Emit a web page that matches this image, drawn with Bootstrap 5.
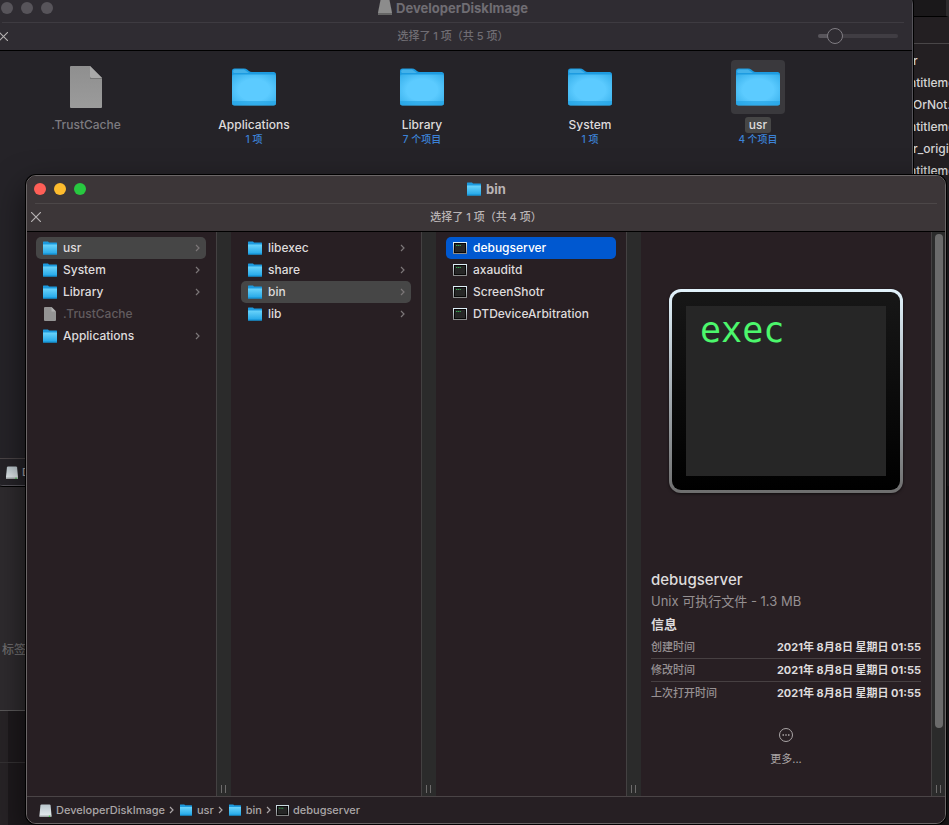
<!DOCTYPE html>
<html lang="zh-CN">
<head>
<meta charset="utf-8">
<meta name="viewport" content="width=device-width, initial-scale=1">
<title>bin</title>
<link href="https://cdn.jsdelivr.net/npm/bootstrap@5.3.0/dist/css/bootstrap.min.css" rel="stylesheet">
<style>
body { font-family: Inter, "Noto Sans CJK SC", sans-serif; font-size: 12px; line-height: 16px; font-weight: 500; background: #1a1719; color: #dedbdc; }
a { color: inherit; text-decoration: none; }
.desktop { min-height: 100vh; }
.win { position: absolute; border-radius: 10px; overflow: hidden; display: flex; flex-direction: column; }
.win-files { top: 0; right: 0; width: 60px; height: 486px; background: #231f22; color: #d5d3d4; border-radius: 0; }
.files-top { height: 17px; background: #1a181a; border-bottom: 1px solid #000; border-right: 3px solid #2c2a2c; }
.files-head { height: 27px; border-bottom: 1px solid #494648; }
.files-list { padding: 6px 0 0 20px; white-space: nowrap; line-height: 22px; }
.win-info { left: -240px; top: 480px; width: 300px; height: 231px; border: 1px solid #5a5859; border-radius: 0 0 10px 10px; background: #2e2b2e; color: #6d6b6d; }
.info-label { font-size: 12px; padding: 0 33px 52px 0; }
.win-back-list { left: -240px; top: 700px; width: 300px; bottom: 0; background: #1d191c; border-left: 0; border-radius: 0; }
.back-list-side { width: 248px; background: #272326; }
.back-list-line { border-bottom: 1px solid #343133; height: 63px; }
.win-disk { left: -7px; right: 36px; top: -6px; height: 492px; background: #252328; border: 1px solid #55535a; box-shadow: 0 0 0 1px #000; }
.win-bin { left: 26px; right: 3px; top: 175px; bottom: 1px; background: #281f23; border: 1px solid #6b6667; box-shadow: 0 0 0 1px #000, 0 12px 32px rgba(0,0,0,.6); }
.bar { background: #3c3638; color: #b9b4b5; }
.win-disk .bar { background: #2f2c32; color: #6f6d73; }
.bar-title { height: 27px; font-size: 13px; font-weight: 700; padding-bottom: 2px; }
.bar-status { height: 28px; font-size: 11px; border-bottom: 1px solid #000; padding-bottom: 1px; }
.bar-rule { height: 0; border-top: 1px solid #4c4748; margin: 0 8px; }
.win-disk .bar-rule { border-color: #3e3b41; }
.lights { position: absolute; left: 7px; top: 0; height: 26px; }
.light { width: 12px; height: 12px; border-radius: 50%; border: 0; padding: 0; background: #57545a; }
.light-close { background: #ff5f57; }
.light-min { background: #febc2e; }
.light-max { background: #28c840; }
.bar-x { position: absolute; left: 3px; top: 0; height: 26px; width: 12px; border: 0; padding: 0; background: none; color: #b5b1b2; }
.zoomer { position: absolute; right: 14px; top: 5px; width: 80px; height: 16px; margin: 0; background: none; -webkit-appearance: none; appearance: none; }
.zoomer::-webkit-slider-runnable-track { height: 4px; border-radius: 2px; background: linear-gradient(90deg, #58555b 20%, #403d43 20%); }
.zoomer::-webkit-slider-thumb { -webkit-appearance: none; width: 16px; height: 16px; margin-top: -6px; border-radius: 50%; background: #2f2c32; border: 1px solid #807d83; }
.icons { padding: 9px 64px 0 8px; }
.icon-item { width: 168px; }
.icon-box { width: 54px; height: 54px; border-radius: 4px; margin-bottom: 3px; }
.icon-item.picked .icon-box { background: #3a393d; }
.icon-name { padding: 0 4px; border-radius: 3px; }
.icon-item.picked .icon-name { background: #464646; }
.icon-note { font-size: 10px; line-height: 13px; color: #3c82d6; }
.icon-item.ghost, .entry.ghost { color: #7d7b80; }
.entry.ghost { color: #625c5f; }
.disk-body { flex: 1 1 auto; }
.path { height: 27px; border-top: 1px solid #4a4446; font-size: 11px; color: #aaa6a7; padding: 0 12px; background: #261f23; }
.win-disk .path { background: #252328; padding: 0 12px; }
.crumb { margin: 0 4px; }
.crumb-sep { margin-right: 5px; }
.pane { width: 190px; padding: 5px 10px 0; }
.pane:first-child { width: 189px; padding-left: 9px; }
.gutter { width: 15px; background: #2b2b2b; border-left: 1px solid #444142; color: #6d6b6b; padding: 0 2px 3px 0; }
.entry { height: 22px; border-radius: 5px; padding: 0 6px; gap: 5px; }
.entry.trail { background: #464646; }
.entry.chosen { background: #0058d0; color: #fff; }
.chev { color: #7c7778; }
.preview { padding: 57px 10px 0; }
.term { width: 234px; height: 204px; border: 3px solid transparent; border-radius: 12px; background: linear-gradient(#171717, #000) padding-box, linear-gradient(#e2f3fc, #a5adb3 50%, #6e6e6e) border-box; padding: 14px; box-shadow: 0 1px 3px rgba(0,0,0,.6); }
.term-screen { background: #262626; color: #4cf76c; font: 35px/48px "DejaVu Sans Mono", monospace; padding-left: 14px; }
.preview-text { margin-top: 77px; }
.file-name { font-size: 15px; line-height: 20px; }
.file-kind { font-size: 13px; line-height: 22px; font-weight: 400; color: #969092; }
.info-head { font-size: 13px; line-height: 24px; font-weight: 700; }
.facts { font-size: 11px; line-height: 16px; color: inherit; }
.facts th, .facts td { padding: 3px 0; }
.facts th { color: #969092; font-weight: 500; }
.facts td { font-weight: 700; }
.facts tr + tr { border-top: 1px solid #474042; }
.more { border: 0; background: none; padding: 0; margin-top: 23px; color: #aaa5a6; font-size: 11px; }
.scroller { background: #2b2b2b; width: 14px; border-left: 1px solid #444142; color: #6d6b6b; padding: 2px 2px 3px; }
.scroller-thumb { width: 8px; flex: 0 1 494px; border-radius: 4px; background: #6b6b6b; }
svg { flex: none; display: block; }
</style>
<script src="https://cdn.jsdelivr.net/npm/bootstrap@5.3.0/dist/js/bootstrap.bundle.min.js"></script>
</head>
<body>
<svg width="0" height="0" class="position-absolute" aria-hidden="true">
  <defs>
    <radialGradient id="gFolder" cx=".5" cy=".5" r=".7"><stop offset=".5" stop-color="#5ccbff"/><stop offset="1" stop-color="#35aeea"/></radialGradient>
    <linearGradient id="gSmall" x2="0" y2="1"><stop offset="0" stop-color="#6bd4fb"/><stop offset="1" stop-color="#1fa4e6"/></linearGradient>
    <linearGradient id="gDisk" x2="0" y2="1"><stop offset="0" stop-color="#b9c6cc"/><stop offset="1" stop-color="#e9eff1"/></linearGradient>
    <linearGradient id="gPage" x2="0" y2="1"><stop offset="0" stop-color="#8f8f8f"/><stop offset="1" stop-color="#9b9b9b"/></linearGradient>
    <linearGradient id="gEdge" x2="0" y2="1"><stop offset="0" stop-color="#e2f3fc"/><stop offset="1" stop-color="#858585"/></linearGradient>
  </defs>
  <symbol id="folder" viewBox="0 0 44 38"><path d="M0 8V3Q0 .5 2.500.5H12Q14 .5 15.500 1.800L17 3Q18 4 20 4H41.500Q44 4 44 6.500V12H0z" fill="#1d9be0"/><path d="M1 4Q1 1.500 3 1.500H12L17 5H2z" fill="#43b2ea"/><path d="M0 8.500Q0 6.500 2 6.500H42Q44 6.500 44 8.500V35Q44 37.500 41.500 37.500H2.500Q0 37.500 0 35z" fill="url(#gFolder)"/><path d="M0 33H44V35Q44 37.500 41.500 37.500H2.500Q0 37.500 0 35z" fill="#20a0e3" opacity=".6"/></symbol>
  <symbol id="folder-s" viewBox="0 0 16 14"><path d="M1 1Q1 .5 1.500.5H6L7 1.500H14.500Q15 1.500 15 2V5H1z" fill="#1c9ade"/><path d="M1 3.500H15V13Q15 13.500 14.500 13.500H1.500Q1 13.500 1 13z" fill="url(#gSmall)"/><path d="M1 12.500H15V13Q15 13.500 14.500 13.500H1.500Q1 13.500 1 13z" fill="#138fd1"/></symbol>
  <symbol id="page" viewBox="0 0 32 42"><path d="M1 0H20L32 12V41Q32 42 31 42H1Q0 42 0 41V1Q0 0 1 0z" fill="url(#gPage)"/><path d="M20 0L32 12H21.500Q20 12 20 10.500z" fill="#a9a9a9"/><path d="M20 10.500Q20 12 21.500 12H32V13H20z" fill="#777"/></symbol>
  <symbol id="page-s" viewBox="0 0 16 14"><path d="M3 0H9.500L14 4.500V13Q14 14 13 14H3Q2 14 2 13V1Q2 0 3 0z" fill="#949494"/><path d="M9.500 0L14 4.500H9.500z" fill="#b0b0b0"/></symbol>
  <symbol id="term-s" viewBox="0 0 14 12"><rect width="14" height="12" fill="url(#gEdge)"/><rect x="1" y="1" width="12" height="10" fill="#080808"/><rect x="2" y="2" width="10" height="8" fill="#262626"/><path d="M3 3.500H8" stroke="#36a850" stroke-dasharray="1.300 .5"/></symbol>
  <symbol id="disk" viewBox="0 0 12 13"><path d="M2 .5H10Q11 .5 11.100 1.500L12 11V12Q12 13 11 13H1Q0 13 0 12V11L.9 1.500Q1 .5 2 .5z" fill="url(#gDisk)"/><path d="M0 11.500H12V12Q12 13 11 13H1Q0 13 0 12z" fill="#a4a9ab"/><circle cx="10" cy="12.200" r=".8" fill="#43c84a"/></symbol>
  <symbol id="disk-dim" viewBox="0 0 14 15"><path d="M2.500 0H11.500L14 12.500V14Q14 15 13 15H1Q0 15 0 14V12.500z" fill="#8c8c8c"/><path d="M0 13H14V14Q14 15 13 15H1Q0 15 0 14z" fill="#656565"/></symbol>
  <symbol id="chev" viewBox="0 0 5 8"><path d="M1 1L4 4L1 7" fill="none" stroke="currentColor" stroke-width="1.200"/></symbol>
  <symbol id="cross" viewBox="0 0 10 10"><path d="M0 0L10 10M10 0L0 10" fill="none" stroke="currentColor" stroke-width="1.200"/></symbol>
  <symbol id="grip" viewBox="0 0 5 8"><path d="M.5 0V8M4.500 0V8" stroke="currentColor"/></symbol>
</svg>

<main class="desktop position-relative overflow-hidden">
  <section class="win win-files">
    <div class="files-top"></div>
    <div class="files-head"></div>
    <div class="files-list">
      <div class="ps-1">r</div><div>ntitleme</div><div class="ps-1">OrNot.</div><div>ntitleme</div><div class="ps-1">r_origi</div><div>ntitleme</div>
    </div>
  </section>

  <section class="win win-back-list">
    <div class="back-list-side flex-grow-1 h-100"></div>
    <div class="position-absolute top-0 end-0 w-100 back-list-line"></div>
  </section>

  <section class="win win-info">
    <div class="d-flex flex-grow-1 align-items-end justify-content-end"><span class="info-label">标签</span></div>
  </section>

  <section class="win win-disk">
    <header class="bar">
      <div class="bar-title d-flex align-items-center justify-content-center position-relative">
        <div class="lights d-flex align-items-center gap-2">
          <button class="light" aria-label="关闭"></button><button class="light" aria-label="最小化"></button><button class="light" aria-label="缩放"></button>
        </div>
        <svg width="14" height="15" class="me-1"><use href="#disk-dim"/></svg><span>DeveloperDiskImage</span>
      </div>
      <div class="bar-rule"></div>
      <div class="bar-status d-flex align-items-center justify-content-center position-relative">
        <button class="bar-x d-flex align-items-center justify-content-center" aria-label="取消"><svg width="9" height="9"><use href="#cross"/></svg></button>
        <span>选择了 1 项（共 5 项）</span>
        <input class="zoomer" type="range" min="0" max="100" value="14" aria-label="图标大小">
      </div>
    </header>
    <div class="disk-body">
      <div class="icons d-flex">
        <a href="#" class="icon-item ghost d-flex flex-column align-items-center"><span class="icon-box d-flex align-items-center justify-content-center"><svg width="32" height="42"><use href="#page"/></svg></span><span class="icon-name">.TrustCache</span></a>
        <a href="#" class="icon-item d-flex flex-column align-items-center"><span class="icon-box d-flex align-items-center justify-content-center"><svg width="44" height="38"><use href="#folder"/></svg></span><span class="icon-name">Applications</span><span class="icon-note">1 项</span></a>
        <a href="#" class="icon-item d-flex flex-column align-items-center"><span class="icon-box d-flex align-items-center justify-content-center"><svg width="44" height="38"><use href="#folder"/></svg></span><span class="icon-name">Library</span><span class="icon-note">7 个项目</span></a>
        <a href="#" class="icon-item d-flex flex-column align-items-center"><span class="icon-box d-flex align-items-center justify-content-center"><svg width="44" height="38"><use href="#folder"/></svg></span><span class="icon-name">System</span><span class="icon-note">1 项</span></a>
        <a href="#" class="icon-item picked d-flex flex-column align-items-center"><span class="icon-box d-flex align-items-center justify-content-center"><svg width="44" height="38"><use href="#folder"/></svg></span><span class="icon-name">usr</span><span class="icon-note">4 个项目</span></a>
      </div>
    </div>
    <footer class="path d-flex align-items-center gap-1"><svg width="12" height="13"><use href="#disk"/></svg><span>DeveloperDiskImage</span></footer>
  </section>

  <section class="win win-bin">
    <header class="bar">
      <div class="bar-title d-flex align-items-center justify-content-center position-relative">
        <div class="lights d-flex align-items-center gap-2">
          <button class="light light-close" aria-label="关闭"></button><button class="light light-min" aria-label="最小化"></button><button class="light light-max" aria-label="缩放"></button>
        </div>
        <svg width="16" height="14" class="me-1"><use href="#folder-s"/></svg><span>bin</span>
      </div>
      <div class="bar-rule"></div>
      <div class="bar-status d-flex align-items-center justify-content-center position-relative">
        <button class="bar-x d-flex align-items-center justify-content-center" aria-label="取消"><svg width="10" height="10"><use href="#cross"/></svg></button>
        <span>选择了 1 项（共 4 项）</span>
      </div>
    </header>

    <div class="d-flex flex-grow-1">
      <nav class="pane flex-shrink-0" aria-label="DeveloperDiskImage">
        <a href="#" class="entry trail d-flex align-items-center"><svg width="16" height="14"><use href="#folder-s"/></svg><span class="flex-grow-1">usr</span><svg class="chev" width="5" height="8"><use href="#chev"/></svg></a>
        <a href="#" class="entry d-flex align-items-center"><svg width="16" height="14"><use href="#folder-s"/></svg><span class="flex-grow-1">System</span><svg class="chev" width="5" height="8"><use href="#chev"/></svg></a>
        <a href="#" class="entry d-flex align-items-center"><svg width="16" height="14"><use href="#folder-s"/></svg><span class="flex-grow-1">Library</span><svg class="chev" width="5" height="8"><use href="#chev"/></svg></a>
        <a href="#" class="entry ghost d-flex align-items-center"><svg width="16" height="14"><use href="#page-s"/></svg><span class="flex-grow-1">.TrustCache</span></a>
        <a href="#" class="entry d-flex align-items-center"><svg width="16" height="14"><use href="#folder-s"/></svg><span class="flex-grow-1">Applications</span><svg class="chev" width="5" height="8"><use href="#chev"/></svg></a>
      </nav>
      <div class="gutter flex-shrink-0 d-flex align-items-end justify-content-center"><svg width="5" height="8"><use href="#grip"/></svg></div>
      <nav class="pane flex-shrink-0" aria-label="usr">
        <a href="#" class="entry d-flex align-items-center"><svg width="16" height="14"><use href="#folder-s"/></svg><span class="flex-grow-1">libexec</span><svg class="chev" width="5" height="8"><use href="#chev"/></svg></a>
        <a href="#" class="entry d-flex align-items-center"><svg width="16" height="14"><use href="#folder-s"/></svg><span class="flex-grow-1">share</span><svg class="chev" width="5" height="8"><use href="#chev"/></svg></a>
        <a href="#" class="entry trail d-flex align-items-center"><svg width="16" height="14"><use href="#folder-s"/></svg><span class="flex-grow-1">bin</span><svg class="chev" width="5" height="8"><use href="#chev"/></svg></a>
        <a href="#" class="entry d-flex align-items-center"><svg width="16" height="14"><use href="#folder-s"/></svg><span class="flex-grow-1">lib</span><svg class="chev" width="5" height="8"><use href="#chev"/></svg></a>
      </nav>
      <div class="gutter flex-shrink-0 d-flex align-items-end justify-content-center"><svg width="5" height="8"><use href="#grip"/></svg></div>
      <nav class="pane flex-shrink-0" aria-label="bin">
        <a href="#" class="entry chosen d-flex align-items-center"><svg width="16" height="12"><use href="#term-s"/></svg><span>debugserver</span></a>
        <a href="#" class="entry d-flex align-items-center"><svg width="16" height="12"><use href="#term-s"/></svg><span>axauditd</span></a>
        <a href="#" class="entry d-flex align-items-center"><svg width="16" height="12"><use href="#term-s"/></svg><span>ScreenShotr</span></a>
        <a href="#" class="entry d-flex align-items-center"><svg width="16" height="12"><use href="#term-s"/></svg><span>DTDeviceArbitration</span></a>
      </nav>
      <div class="gutter flex-shrink-0 d-flex align-items-end justify-content-center"><svg width="5" height="8"><use href="#grip"/></svg></div>

      <article class="preview flex-grow-1">
        <div class="term mx-auto d-flex"><div class="term-screen flex-grow-1">exec</div></div>
        <div class="preview-text">
          <div class="file-name">debugserver</div>
          <div class="file-kind">Unix 可执行文件 - 1.3 MB</div>
          <div class="info-head">信息</div>
          <table class="facts w-100">
            <tbody>
              <tr><th scope="row">创建时间</th><td class="text-end">2021年 8月8日 星期日 01:55</td></tr>
              <tr><th scope="row">修改时间</th><td class="text-end">2021年 8月8日 星期日 01:55</td></tr>
              <tr><th scope="row">上次打开时间</th><td class="text-end">2021年 8月8日 星期日 01:55</td></tr>
            </tbody>
          </table>
        </div>
        <button class="more d-flex flex-column align-items-center gap-2 mx-auto">
          <svg width="16" height="16" viewBox="0 0 16 16"><circle cx="8" cy="8" r="6.500" fill="none" stroke="currentColor"/><path d="M4.500 8H6M7.300 8H8.700M10 8H11.500" stroke="currentColor" stroke-width="1.500"/></svg>
          <span>更多...</span>
        </button>
      </article>
      <div class="scroller flex-shrink-0 d-flex flex-column align-items-center justify-content-between"><div class="scroller-thumb"></div><svg width="5" height="8"><use href="#grip"/></svg></div>
    </div>

    <footer class="path d-flex align-items-center">
      <svg width="13" height="13"><use href="#disk"/></svg><a href="#" class="crumb">DeveloperDiskImage</a><svg width="5" height="8" class="crumb-sep"><use href="#chev"/></svg>
      <svg width="14" height="12"><use href="#folder-s"/></svg><a href="#" class="crumb">usr</a><svg width="5" height="8" class="crumb-sep"><use href="#chev"/></svg>
      <svg width="14" height="12"><use href="#folder-s"/></svg><a href="#" class="crumb">bin</a><svg width="5" height="8" class="crumb-sep"><use href="#chev"/></svg>
      <svg width="13" height="11"><use href="#term-s"/></svg><a href="#" class="crumb">debugserver</a>
    </footer>
  </section>
</main>
</body>
</html>
